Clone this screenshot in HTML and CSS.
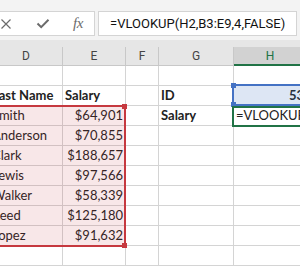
FILE: index.html
```html
<!DOCTYPE html>
<html lang="en">
<head>
    <meta charset="UTF-8">
    <meta name="viewport" content="width=device-width,initial-scale=1.0">
    <title>VLOOKUP</title>
    <link rel="stylesheet" href="styles.css">
</head>
<body>
    <!-- Formula bar -->
    <div class="fbar">
        <div class="fbar-btns">
            <svg class="ico-x" width="10" height="10" viewBox="0 0 10 10"><path d="M0.5 0.5L9.5 9.5M9.5 0.5L0.5 9.5" stroke="#6b6b6b" stroke-width="1.2" fill="none"/></svg>
            <svg class="ico-ok" width="14" height="11" viewBox="0 0 14 11"><path d="M1.5 5.5L5.2 9.2L12.5 1.8" stroke="#6b6b6b" stroke-width="2" fill="none"/></svg>
            <span class="ico-fx">fx</span>
        </div>
        <div class="fbar-input">=VLOOKUP(H2,B3:E9,4,FALSE)</div>
    </div>

    <!-- Sheet -->
    <div class="sheet">
        <div class="cols hdr">
            <div class="hc">D</div>
            <div class="hc">E</div>
            <div class="hc">F</div>
            <div class="hc">G</div>
            <div class="hc hc-on">H</div>
            <div class="hc"></div>
        </div>
        <div class="cols grid" id="grid"></div>

        <div class="ref ref-red"><i class="hdl hdl-tr"></i><i class="hdl hdl-br"></i></div>
        <div class="ref ref-blue"><i class="hdl hdl-tl"></i><i class="hdl hdl-bl"></i></div>
        <div class="active-cell"></div>
    </div>

    <script>
        // rows shown in the sheet: D, E, F, G, H, I
        const rows = [
            ['', '', '', '', '', ''],
            ['Last Name', 'Salary', '', 'ID', '53', ''],
            ['Smith', '$64,901', '', 'Salary', '=VLOOKUP(H2,B3:E9,4,FALSE)', ''],
            ['Anderson', '$70,855', '', '', '', ''],
            ['Clark', '$188,657', '', '', '', ''],
            ['Lewis', '$97,566', '', '', '', ''],
            ['Walker', '$58,339', '', '', '', ''],
            ['Reed', '$125,180', '', '', '', ''],
            ['Lopez', '$91,632', '', '', '', ''],
            ['', '', '', '', '', '']
        ];
        const grid = document.getElementById('grid');
        rows.forEach((row, r) => {
            row.forEach((val, c) => {
                const div = document.createElement('div');
                div.className = 'cell';
                if (r === 1) div.classList.add('bold');
                if (r === 2 && c === 3) div.classList.add('bold');
                if (val.startsWith('$') || (r === 1 && c === 4)) div.classList.add('num');
                div.textContent = val;
                grid.appendChild(div);
            });
        });
    </script>
</body>
</html>
```

FILE: styles.css
```css
* {
    box-sizing: border-box;
}
body {
    margin: 0;
    width: 300px;
    height: 267px;
    overflow: hidden;
    background: #fff;
    font-family: Lato, "Liberation Sans", sans-serif;
    color: #222;
}
.fbar {
    display: flex;
    gap: 3px;
    height: 40px;
    padding-top: 11px;
    background: #f3f3f3;
}
.fbar-btns {
    display: flex;
    align-items: center;
    width: 96px;
    height: 25px;
    margin-left: -1px;
    padding-left: 1px;
    background: #fff;
    border: 1px solid #d4d4d4;
}
.ico-x {
    margin-right: 25px;
}
.ico-ok {
    margin-right: 23px;
}
.ico-fx {
    font-family: "Liberation Serif", serif;
    font-style: italic;
    font-size: 15px;
    color: #6b6b6b;
    letter-spacing: -0.5px;
}
.fbar-input {
    width: 199px;
    height: 25px;
    padding-left: 11px;
    background: #fff;
    border: 1px solid #d4d4d4;
    font-family: Roboto, sans-serif;
    font-size: 13px;
    line-height: 23px;
    color: #111;
    white-space: nowrap;
    overflow: hidden;
}
.sheet {
    position: relative;
    margin-left: -10px;
}
.cols {
    display: grid;
    grid-template-columns: 73px 63px 33px 75px 73px 60px;
}
.hdr {
    height: 26px;
    padding-top: 7px;
    background: #e6e6e6;
    border-bottom: 1px solid #c8c8c8;
}
.hc {
    display: flex;
    align-items: center;
    justify-content: center;
    border-right: 1px solid #c8c8c8;
    font-family: Roboto, sans-serif;
    font-size: 12px;
    color: #444;
}
.hc-on {
    background: #d2d2d2;
    color: #217346;
    border-bottom: 2px solid #217346;
    margin-bottom: -1px;
}
.grid {
    grid-auto-rows: 20px;
}
.cell {
    border-right: 1px solid #d4d4d4;
    border-bottom: 1px solid #d4d4d4;
    padding: 0 2px;
    font-size: 13px;
    line-height: 19px;
    white-space: nowrap;
}
.bold {
    font-weight: bold;
}
.num {
    text-align: right;
}
.ref {
    position: absolute;
    border: 2px solid;
}
.ref-red {
    left: 0;
    top: 65px;
    width: 136px;
    height: 142px;
    border-color: #c6393f;
    background: rgba(199, 57, 68, 0.12);
}
.ref-blue {
    left: 242px;
    top: 44px;
    width: 100px;
    height: 22px;
    border-color: #4472c4;
    background: rgba(68, 114, 196, 0.18);
}
.hdl {
    position: absolute;
    width: 5px;
    height: 5px;
}
.ref-red .hdl {
    background: #c6393f;
}
.ref-blue .hdl {
    background: #4472c4;
}
.hdl-tr {
    right: -3px;
    top: -3px;
}
.hdl-br {
    right: -3px;
    bottom: -3px;
}
.hdl-tl {
    left: -3px;
    top: -3px;
}
.hdl-bl {
    left: -3px;
    bottom: -3px;
}
.active-cell {
    position: absolute;
    left: 242px;
    top: 66px;
    width: 100px;
    height: 21px;
    border: 2px solid #217346;
}
```
